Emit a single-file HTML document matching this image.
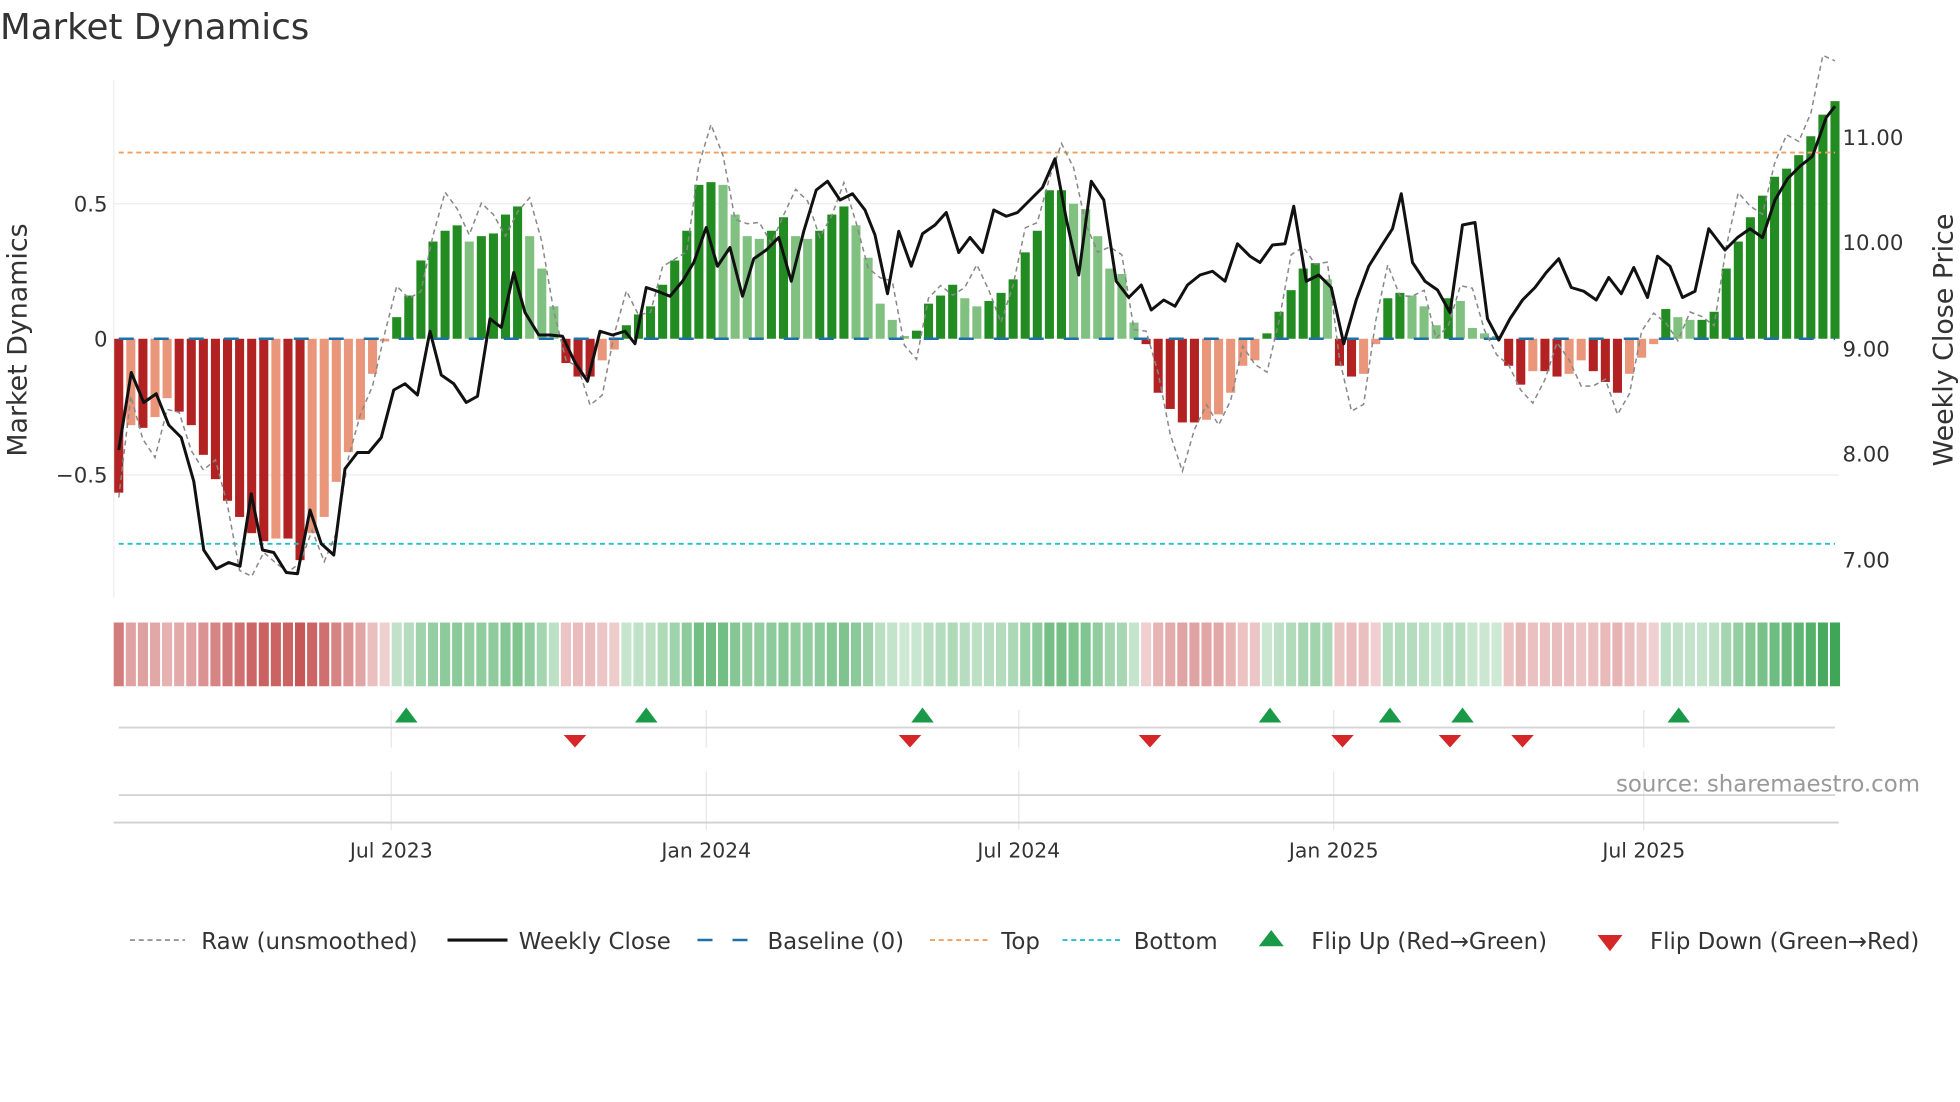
<!DOCTYPE html>
<html><head><meta charset="utf-8"><style>
html,body{margin:0;padding:0;background:#fff;width:1960px;height:1102px;overflow:hidden}
svg{display:block}
text{font-family:"DejaVu Sans","Liberation Sans",sans-serif;fill:#333}
</style></head><body>
<svg id="s" width="1960" height="1102" viewBox="0 0 1568 881.6" xmlns="http://www.w3.org/2000/svg">
<text x="0" y="31" font-size="28.5">Market Dynamics</text>
<line x1="91" y1="64" x2="91" y2="478" stroke="#eee" stroke-width="1"/>
<line x1="91" y1="163" x2="1471" y2="163" stroke="#ececec"/>
<line x1="91" y1="380" x2="1471" y2="380" stroke="#ececec"/>
<text x="86" y="169" font-size="17" text-anchor="end">0.5</text>
<text x="86" y="277" font-size="17" text-anchor="end">0</text>
<text x="86" y="386" font-size="17" text-anchor="end">−0.5</text>
<text x="1474" y="116" font-size="17">11.00</text>
<text x="1474" y="200" font-size="17">10.00</text>
<text x="1474" y="285" font-size="17">9.00</text>
<text x="1474" y="369" font-size="17">8.00</text>
<text x="1474" y="454" font-size="17">7.00</text>
<text transform="translate(21,272) rotate(-90)" font-size="21.5" text-anchor="middle">Market Dynamics</text>
<text transform="translate(1562,272) rotate(-90)" font-size="21.5" text-anchor="middle">Weekly Close Price</text>
<g id="bars"></g>
<line x1="95" y1="122" x2="1468" y2="122" stroke="#f0a060" stroke-width="1.5" stroke-dasharray="4,3"/>
<line x1="95" y1="435" x2="1468" y2="435" stroke="#20c0d0" stroke-width="1.5" stroke-dasharray="4,3"/>
<line x1="95" y1="271" x2="1468" y2="271" stroke="#2070a8" stroke-width="2" stroke-dasharray="12,16"/>
<polyline id="raw" fill="none" stroke="#888" stroke-width="1.2" stroke-dasharray="4,3"/>
<polyline id="price" fill="none" stroke="#111" stroke-width="2.4" stroke-linejoin="round"/>
<g id="heat"></g>
<g stroke="#e6e6e6" stroke-width="1">
<line x1="313" y1="568" x2="313" y2="598"/><line x1="565" y1="568" x2="565" y2="598"/><line x1="815" y1="568" x2="815" y2="598"/><line x1="1067" y1="568" x2="1067" y2="598"/><line x1="1315" y1="568" x2="1315" y2="598"/>
<line x1="313" y1="617" x2="313" y2="664"/><line x1="565" y1="617" x2="565" y2="664"/><line x1="815" y1="617" x2="815" y2="664"/><line x1="1067" y1="617" x2="1067" y2="664"/><line x1="1315" y1="617" x2="1315" y2="664"/>
</g>
<line x1="95" y1="582" x2="1468" y2="582" stroke="#d4d4d4" stroke-width="1.5"/>
<line x1="95" y1="636" x2="1468" y2="636" stroke="#d4d4d4" stroke-width="1.5"/>
<line x1="91" y1="658" x2="1471" y2="658" stroke="#d0d0d0" stroke-width="1.5"/>
<g id="flips"></g>
<text x="1536" y="633" font-size="18.3" text-anchor="end" style="fill:#999">source: sharemaestro.com</text>
<g font-size="16.3" text-anchor="middle">
<text x="313" y="686">Jul 2023</text><text x="565" y="686">Jan 2024</text><text x="815" y="686">Jul 2024</text><text x="1067" y="686">Jan 2025</text><text x="1315" y="686">Jul 2025</text>
</g>
<g font-size="18.3">
<line x1="104" y1="752" x2="148" y2="752" stroke="#888" stroke-width="1.3" stroke-dasharray="4,3"/>
<text x="161" y="759">Raw (unsmoothed)</text>
<line x1="358" y1="752" x2="406" y2="752" stroke="#111" stroke-width="2.5"/>
<text x="415" y="759">Weekly Close</text>
<line x1="558" y1="752" x2="602" y2="752" stroke="#2070a8" stroke-width="2" stroke-dasharray="12,16"/>
<text x="614" y="759">Baseline (0)</text>
<line x1="744" y1="752" x2="790" y2="752" stroke="#f0a060" stroke-width="1.5" stroke-dasharray="4,3"/>
<text x="801" y="759">Top</text>
<line x1="850" y1="752" x2="896" y2="752" stroke="#20c0d0" stroke-width="1.5" stroke-dasharray="4,3"/>
<text x="907" y="759">Bottom</text>
<polygon points="1017,744 1027,757 1007,757" fill="#1a9a48"/>
<text x="1049" y="759">Flip Up (Red→Green)</text>
<polygon points="1278,748 1298,748 1288,761" fill="#d62728"/>
<text x="1320" y="759">Flip Down (Green→Red)</text>
</g>
</svg>
<script>
var v=[-0.57,-0.32,-0.33,-0.29,-0.22,-0.27,-0.32,-0.43,-0.52,-0.6,-0.66,-0.72,-0.75,-0.74,-0.74,-0.82,-0.72,-0.66,-0.53,-0.42,-0.3,-0.13,-0.01,
0.08,0.16,0.29,0.36,0.4,0.42,0.36,0.38,0.39,0.46,0.49,0.38,0.26,0.12,
-0.09,-0.14,-0.14,-0.08,-0.04,
0.05,0.09,0.12,0.2,0.29,0.4,0.57,0.58,0.57,0.46,0.38,0.37,0.4,0.45,0.38,0.37,0.4,0.46,0.49,0.42,0.3,0.13,0.07,0.01,0.03,0.13,0.16,0.2,0.15,0.12,0.14,0.17,0.22,0.32,0.4,0.55,0.55,0.5,0.48,0.38,0.26,0.24,0.06,
-0.02,-0.2,-0.26,-0.31,-0.31,-0.3,-0.28,-0.2,-0.1,-0.08,
0.02,0.1,0.18,0.26,0.28,0.22,
-0.1,-0.14,-0.13,-0.02,
0.15,0.17,0.16,0.12,0.05,0.15,0.14,0.04,0.02,0.01,
-0.1,-0.17,-0.12,-0.12,-0.14,-0.13,-0.08,-0.12,-0.16,-0.2,-0.13,-0.07,-0.02,
0.11,0.08,0.07,0.07,0.1,0.26,0.36,0.45,0.53,0.6,0.63,0.68,0.75,0.83,0.88];
var n=v.length,x0=95,x1=1468,p=(x1-x0)/(n-1),w=p*0.75,z=271,k=216;
var b="",h="",raw=[];
for(var i=0;i<n;i++){var x=x0+i*p,y=v[i],pv=i?v[i-1]:0,c;
if(y>=0)c=(y>=pv)?"#228b22":"#80c080";else c=(y<=pv)?"#b22222":"#e9967a";
var t=Math.min(z,z-y*k),hh=Math.max(1.5,Math.abs(y*k));
b+='<rect x="'+(x-w/2)+'" y="'+t+'" width="'+w+'" height="'+hh+'" fill="'+c+'"/>';
var a=0.25+0.75*Math.min(1,Math.abs(y)/0.9),col=y>=0?"rgba(60,165,85,"+a+")":"rgba(195,75,75,"+a+")";
h+='<rect x="'+(x-p/2+0.8)+'" y="498" width="'+(p-1.6)+'" height="51" fill="'+col+'"/>';
var r=y*1.12+0.09*Math.sin(i*1.7)+0.06*Math.sin(i*0.9+1);raw.push(x.toFixed(1)+","+(z-r*k).toFixed(1));}
document.getElementById("bars").innerHTML=b;document.getElementById("heat").innerHTML=h;
document.getElementById("raw").setAttribute("points",raw.join(" "));
document.getElementById("price").setAttribute("points","95,360 105,298 115,322 125,315 135,340 145,350 155,385 163,440 173,455 183,450 192,453 201,395 210,440 219,442 229,458 238,459 248,408 257,435 267,444 276,375 286,362 295,362 305,350 315,312 324,307 334,316 344,265 353,300 363,307 373,322 382,317 392,255 401,262 411,218 420,250 431,268 440,268 450,269 460,290 470,305 480,265 490,268 500,265 508,275 517,230 526,233 536,237 546,225 555,210 565,182 574,213 584,198 594,237 603,207 613,200 623,190 633,225 643,185 653,152 662,145 672,160 682,155 692,168 700,188 710,235 719,185 729,213 738,187 748,180 757,170 767,202 776,190 786,202 795,168 805,173 814,170 824,160 834,150 844,127 853,175 863,220 873,145 883,160 893,225 903,238 913,228 921,248 931,240 940,245 950,228 960,220 970,217 980,225 990,195 1000,205 1008,210 1018,196 1028,195 1035,165 1045,225 1055,220 1065,230 1075,275 1085,240 1095,213 1105,197 1114,183 1121,155 1130,210 1140,225 1150,232 1160,250 1170,180 1180,178 1190,255 1199,272 1208,255 1218,240 1228,230 1237,218 1247,207 1257,230 1267,233 1277,240 1287,222 1297,235 1307,214 1318,238 1326,205 1336,213 1346,238 1356,233 1367,183 1380,200 1390,190 1400,183 1410,190 1420,160 1430,143 1440,133 1450,125 1461,94 1468,85");
var f="",up=[325,517,738,1016,1112,1170,1343],dn=[460,728,920,1074,1160,1218];
up.forEach(function(x){f+='<polygon points="'+x+',566 '+(x+9)+',578 '+(x-9)+',578" fill="#1a9a48"/>';});
dn.forEach(function(x){f+='<polygon points="'+(x-9)+',588 '+(x+9)+',588 '+x+',598" fill="#d62728"/>';});
document.getElementById("flips").innerHTML=f;
</script>
</body></html>
